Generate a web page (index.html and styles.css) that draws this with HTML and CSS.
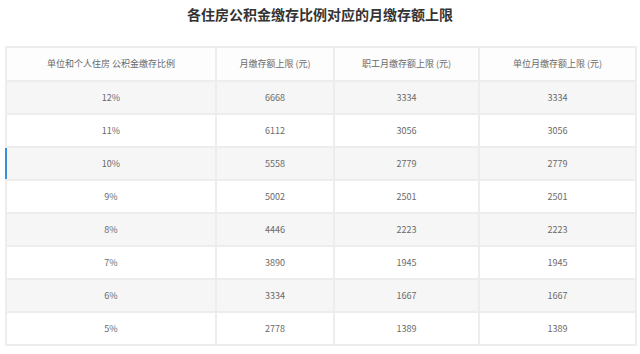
FILE: index.html
```html
<!DOCTYPE html>
<html lang="zh-CN">
<head>
<meta charset="utf-8">
<link rel="stylesheet" href="styles.css">
</head>
<body>
<h1 class="title">各住房公积金缴存比例对应的月缴存额上限</h1>
<table class="grid">
  <colgroup>
    <col class="c1"><col class="c2"><col class="c3"><col class="c4">
  </colgroup>
  <thead>
    <tr><th>单位和个人住房 公积金缴存比例</th><th>月缴存额上限 (元)</th><th>职工月缴存额上限 (元)</th><th>单位月缴存额上限 (元)</th></tr>
  </thead>
  <tbody>
    <tr class="alt"><td>12%</td><td>6668</td><td>3334</td><td>3334</td></tr>
    <tr><td>11%</td><td>6112</td><td>3056</td><td>3056</td></tr>
    <tr class="alt active"><td>10%</td><td>5558</td><td>2779</td><td>2779</td></tr>
    <tr><td>9%</td><td>5002</td><td>2501</td><td>2501</td></tr>
    <tr class="alt"><td>8%</td><td>4446</td><td>2223</td><td>2223</td></tr>
    <tr><td>7%</td><td>3890</td><td>1945</td><td>1945</td></tr>
    <tr class="alt"><td>6%</td><td>3334</td><td>1667</td><td>1667</td></tr>
    <tr><td>5%</td><td>2778</td><td>1389</td><td>1389</td></tr>
  </tbody>
</table>
</body>
</html>
```

FILE: styles.css
```css
html, body {
  margin: 0;
  padding: 0;
  background: #ffffff;
}
body {
  font-family: "Noto Sans CJK SC", "Noto Sans", sans-serif;
  padding: 0 5px 0 5px;
}
.title {
  margin: 0;
  height: 46px;
  padding-top: 5px;
  box-sizing: border-box;
  text-align: center;
  font-size: 14px;
  line-height: 18px;
  font-weight: bold;
  color: #333333;
}
.grid {
  width: 630px;
  border-collapse: collapse;
  table-layout: fixed;
  border: 2px solid #e2e2e2;
}
.c1 { width: 210px; }
.c2 { width: 118px; }
.c3 { width: 145px; }
.c4 { width: 157px; }
.grid th, .grid td {
  height: 31px;
  padding: 0;
  border: 2px solid #ededed;
  text-align: center;
  vertical-align: middle;
  font-size: 9px;
  font-weight: normal;
  color: #6a6a6a;
  line-height: 12px;
}
.grid thead th {
  background: #fdfdfd;
  height: 32px;
}
.grid tr.alt td {
  background: #f6f6f6;
}
.grid tr.active td:first-child {
  border-left: 2px solid #3b8fd9;
}
```
